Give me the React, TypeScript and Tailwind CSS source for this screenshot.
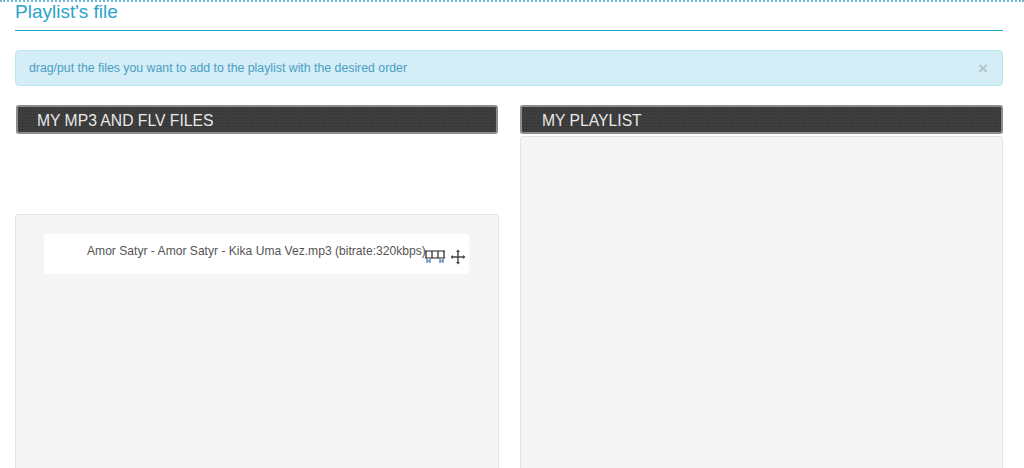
import React from "react";

function FilmIcon() {
  return (
    <svg width="20" height="14" viewBox="0 0 20 14" className="shrink-0">
      <path d="M0 1H20M0 8H20M1 1V8M7 1V8M13 1V8M19 1V8" stroke="#222" strokeWidth="1.2" fill="none" />
      <path d="M2 9V13M5 9V13M2 11H5M15 9V13M18 9V13M15 11H18" stroke="#3f78b5" strokeWidth="1.2" fill="none" />
    </svg>
  );
}

function MoveIcon() {
  return (
    <svg width="16" height="16" viewBox="0 0 16 16" className="shrink-0">
      <path d="M8 2V14M2 8H14" stroke="#444" strokeWidth="1.4" fill="none" />
      <path d="M8 0.5L10 3H6ZM8 15.5L10 13H6ZM0.5 8L3 6V10ZM15.5 8L13 6V10Z" fill="#444" />
    </svg>
  );
}

function Heading({ children, indent }: { children: React.ReactNode; indent: string }) {
  return (
    <div className={`h-[29px] rounded-[3px] border-2 border-[#8c8c8c] bg-[#383838] bg-[radial-gradient(#2f2f2f_1px,#3e3e3e_1px)] bg-[length:3px_3px] ${indent} text-[15.7px] leading-[27px] text-[#e8e8e8]`}>
      {children}
    </div>
  );
}

export default function App() {
  return (
    <div className="h-[468px] w-[1024px] overflow-hidden bg-white font-['Liberation_Sans',Arial,sans-serif]">
      <div className="h-[2px] border-t-2 border-dotted border-[#6fbcd8]" />
      <div className="px-[15px] pr-[21px]">
        <h1 className="h-[29px] border-b border-[#1ba6c9] text-[19px] leading-[20px] text-[#2aa5c8]">Playlist's file</h1>
        <div className="mt-[19px] flex h-[36px] items-center justify-between rounded-[4px] border border-[#bce8f1] bg-[#d4edf7] pl-[13px] pr-[14px] text-[12.3px] text-[#4a9fc4]">
          <span>drag/put the files you want to add to the playlist with the desired order</span>
          <span className="text-[17px] font-bold leading-none text-[#b4c2ca]">×</span>
        </div>
        <div className="mt-[19px] grid grid-cols-[484px_483px] gap-x-[21px]">
          <div>
            <div className="px-[1px]">
              <Heading indent="pl-[19px]">MY MP3 AND FLV FILES</Heading>
            </div>
            <div className="mt-[80px] h-[300px] rounded-t-[3px] border border-[#e3e3e3] bg-[#f5f5f5] pl-[28px] pr-[29px] pt-[19px]">
              <div className="flex h-[40px] items-start rounded-[4px] bg-white pl-[43px] pr-[4px] pt-[10px] text-[12.1px] leading-[14px] text-[#555]">
                <span className="whitespace-nowrap">Amor Satyr - Amor Satyr - Kika Uma Vez.mp3 (bitrate:320kbps)</span>
                <span className="mt-[6px] -ml-[1px]"><FilmIcon /></span>
                <span className="ml-[5px] mt-[5px]"><MoveIcon /></span>
              </div>
            </div>
          </div>
          <div>
            <Heading indent="pl-[20px]">MY PLAYLIST</Heading>
            <div className="mt-[2px] h-[340px] rounded-t-[3px] border border-[#e3e3e3] bg-[#f5f5f5]" />
          </div>
        </div>
      </div>
    </div>
  );
}
